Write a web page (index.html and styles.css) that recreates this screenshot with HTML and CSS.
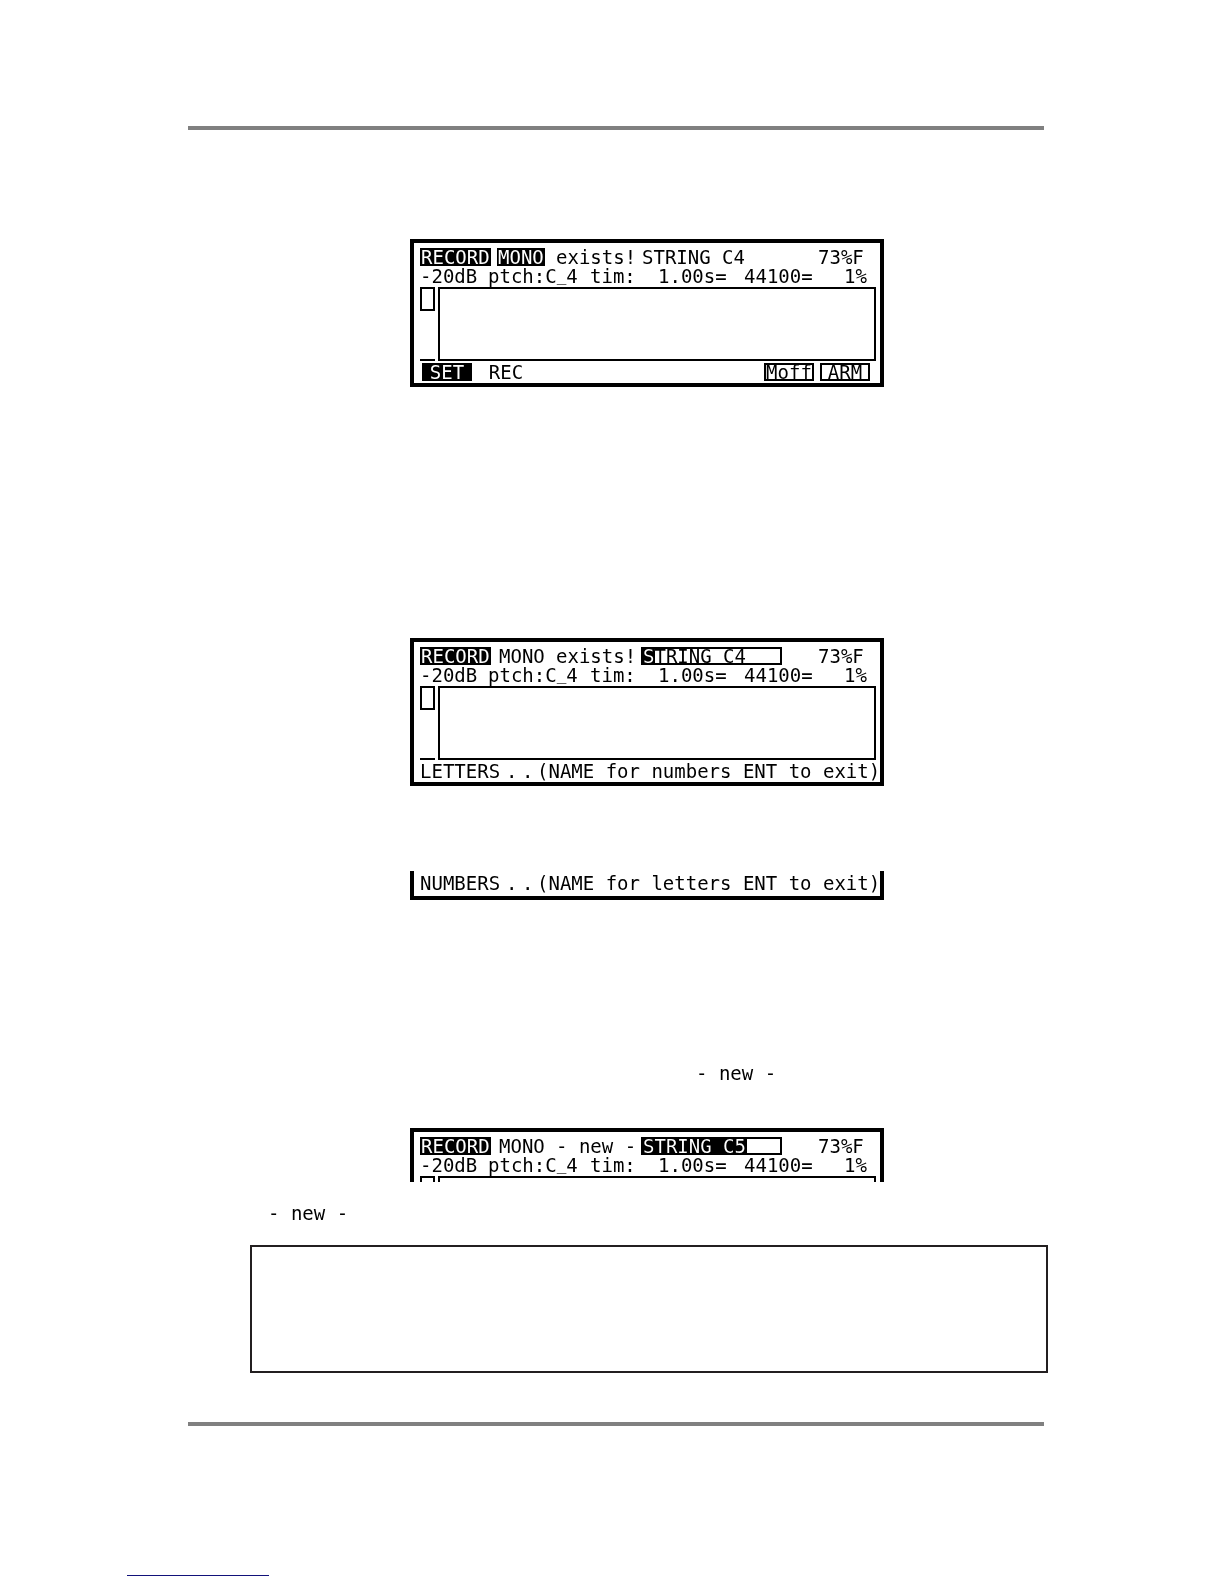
FILE: index.html
```html
<!DOCTYPE html>
<html lang="en">
<head>
  <meta charset="UTF-8">
  <meta name="viewport" content="width=device-width, initial-scale=1.0">
  <title>Record: naming a sample</title>
  <link rel="stylesheet" href="styles.css">
</head>
<body>
  <main class="page">
    <hr class="rule">
    <div class="content">

      <section class="lcd lcd-first">
        <div class="row title-row">
          <span class="inverse">RECORD</span>
          <span class="mode mode-on"><span class="inverse">MONO</span></span>
          <span>exists!</span>
          <span class="name">STRING C4</span>
          <span>73%F</span>
        </div>
        <div class="row info-row">
          <span>-20dB</span><span>ptch:C<span class="low-line">_</span>4</span><span>tim:</span><span>1.00s=</span><span>44100=</span><span>1%</span>
        </div>
        <div class="scope">
          <div class="meter"><div class="level"></div></div>
          <div class="wave"></div>
        </div>
        <div class="row keys">
          <button type="button" class="key key-on">SET</button>
          <button type="button" class="key key-plain">REC</button>
          <button type="button" class="key key-right">Moff</button>
          <button type="button" class="key">ARM</button>
        </div>
      </section>

      <section class="lcd lcd-letters">
        <div class="row title-row">
          <span class="inverse">RECORD</span>
          <span class="mode">MONO</span>
          <span>exists!</span>
          <span class="field">
            <input type="text" class="name-input" aria-label="Sample name" value="STRING C4">
            <span class="cursor cursor-one"></span>
          </span>
          <span>73%F</span>
        </div>
        <div class="row info-row">
          <span>-20dB</span><span>ptch:C<span class="low-line">_</span>4</span><span>tim:</span><span>1.00s=</span><span>44100=</span><span>1%</span>
        </div>
        <div class="scope">
          <div class="meter"><div class="level"></div></div>
          <div class="wave"></div>
        </div>
        <div class="row prompt-row">
          <span>LETTERS</span><span>.</span><span>.</span><span>(NAME for numbers ENT to exit)</span>
        </div>
      </section>

      <section class="lcd lcd-bottom">
        <div class="row prompt-row">
          <span>NUMBERS</span><span>.</span><span>.</span><span>(NAME for letters ENT to exit)</span>
        </div>
      </section>

      <p class="inline-text inline-right">- new -</p>

      <section class="lcd lcd-top">
        <div class="row title-row">
          <span class="inverse">RECORD</span>
          <span class="mode">MONO</span>
          <span>- new -</span>
          <span class="field">
            <input type="text" class="name-input" aria-label="Sample name" value="STRING C5">
            <span class="cursor cursor-all"></span>
          </span>
          <span>73%F</span>
        </div>
        <div class="row info-row">
          <span>-20dB</span><span>ptch:C<span class="low-line">_</span>4</span><span>tim:</span><span>1.00s=</span><span>44100=</span><span>1%</span>
        </div>
        <div class="scope">
          <div class="meter"><div class="level"></div></div>
          <div class="wave"></div>
        </div>
      </section>

      <p class="inline-text inline-left">- new -</p>

      <div class="note"></div>
    </div>
    <hr class="rule">
  </main>
  <footer class="footer">
    <div class="link-line"></div>
  </footer>
</body>
</html>
```
FILE: styles.css
```css
* {
  box-sizing: border-box;
}
body {
  margin: 0;
  background-color: #fff;
  color: #000;
  font-family: "DejaVu Sans Mono", monospace;
  font-size: 19px;
  line-height: 18px;
}
.page {
  padding: 126px 180px 0 188px;
}
.rule {
  height: 4px;
  margin: 0;
  border: none;
  background-color: #808080;
}
.content {
  padding: 109px 0 49px 62px;
}

/* LCD panels */
.lcd {
  width: 474px;
  margin: 0 auto;
  padding: 5px 4px 2px 6px;
  border: 4px solid #000;
  white-space: nowrap;
}
.lcd-letters {
  margin-top: 251px;
}
.lcd-bottom {
  margin-top: 85px;
  padding-top: 3px;
  padding-bottom: 4px;
  border-top: none;
}
.lcd-top {
  height: 54px;
  margin-top: 46px;
  padding-bottom: 0;
  border-bottom: none;
  overflow: hidden;
}
.row {
  display: grid;
  height: 18px;
}
.title-row {
  grid-template-columns: 77px 59px 85px 177px 1fr;
}
.info-row {
  grid-template-columns: 68px 102px 68px 86px 100px 1fr;
  margin-top: 1px;
}
.prompt-row {
  grid-template-columns: 86px 16px 15px 1fr;
}
.inverse {
  justify-self: start;
  display: inline-block;
  padding: 0 1px;
  background-color: #000;
  color: #fff;
}
.mode {
  padding-left: 2px;
}
.mode-on {
  padding-left: 0;
}
.name {
  padding-left: 1px;
}
/* keeps the underscore clear of the scope frame */
.low-line {
  font-size: 16px;
  line-height: 1px;
  vertical-align: 2px;
}

/* name entry */
.field {
  position: relative;
  width: 141px;
  height: 18px;
}
.name-input {
  display: block;
  width: 100%;
  height: 18px;
  padding: 0;
  border: 2px solid #000;
  border-radius: 0;
  background: #fff;
  color: #000;
  font: inherit;
}
.cursor {
  position: absolute;
  top: 2px;
  left: 2px;
  height: 14px;
  background-color: #fff;
  mix-blend-mode: difference;
}
.cursor-one {
  width: 12px;
}
.cursor-all {
  width: 104px;
}

/* level meter and waveform window */
.scope {
  display: grid;
  grid-template-columns: 15px 1fr;
  gap: 3px;
  height: 74px;
  margin: 2px 0;
}
.meter {
  border-bottom: 2px solid #000;
}
.level {
  height: 24px;
  border: 2px solid #000;
}
.wave {
  border: 2px solid #000;
}

/* soft keys */
.keys {
  display: flex;
  gap: 6px;
  padding: 0 6px 0 2px;
}
.key {
  width: 50px;
  height: 18px;
  padding: 0;
  border: 2px solid #000;
  border-radius: 0;
  background: none;
  color: #000;
  font: inherit;
  line-height: 14px;
}
.key-on {
  background-color: #000;
  color: #fff;
}
.key-plain {
  width: 56px;
  border-color: transparent;
}
.key-right {
  margin-left: auto;
}

.inline-text {
  margin: 0;
}
.inline-right {
  margin-top: 164px;
  padding-left: 446px;
}
.inline-left {
  margin-top: 22px;
  padding-left: 18px;
}
.note {
  height: 128px;
  margin: 23px -4px 0 0;
  border: 2px solid #231f20;
}
.footer {
  padding: 149px 0 8px 127px;
}
.link-line {
  width: 142px;
  height: 1px;
  background-color: #12127a;
}
```
